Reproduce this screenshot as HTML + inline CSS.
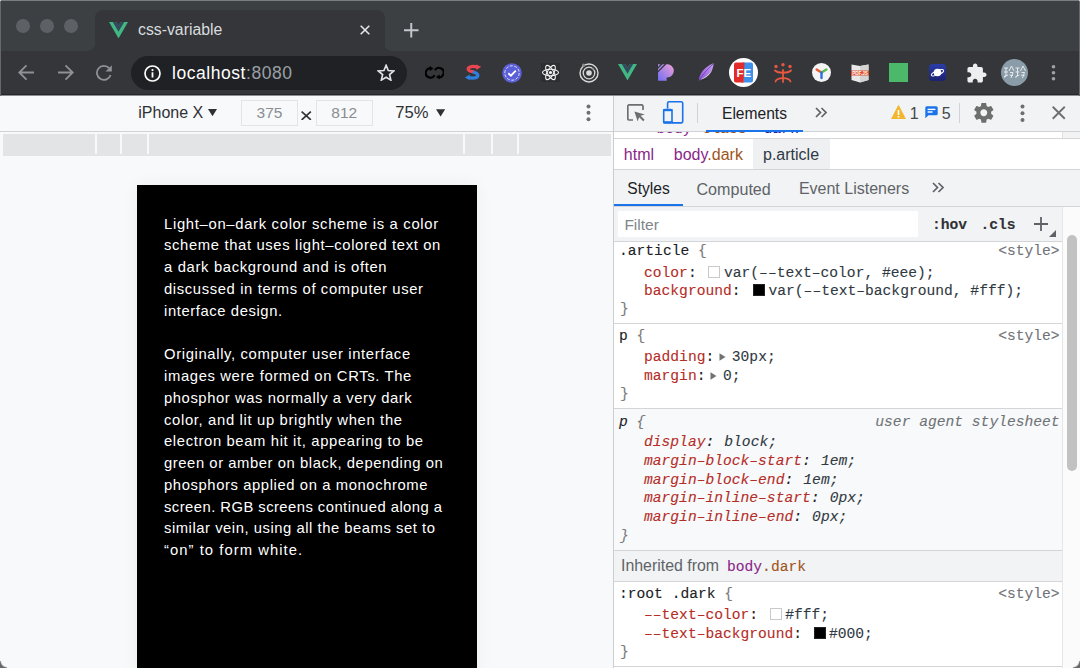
<!DOCTYPE html>
<html><head><meta charset="utf-8">
<style>
*{box-sizing:border-box;margin:0;padding:0}
html,body{width:1080px;height:668px;overflow:hidden;background:#fff}
body{position:relative;font-family:"Liberation Sans",sans-serif}
.a{position:absolute}
.mono{font-family:"Liberation Mono",monospace}
#frame{left:0;top:0;width:1080px;height:668px;border-radius:3px 3px 0 0;background:#3c4043;overflow:hidden}
#tab{left:95px;top:10px;width:290px;height:41px;background:#343639;border-radius:8px 8px 0 0}
.foot{width:8px;height:8px;top:43px;background:#343639}
#toolbar{left:0;top:51px;width:1080px;height:44px;background:#343639;border-bottom:1px solid #26272a}
#omni{left:131px;top:56px;width:276px;height:34px;border-radius:17px;background:#202124}
.tl{width:14px;height:14px;border-radius:50%;background:#5d6064;top:19px}
#page{left:0;top:96px;width:613px;height:572px;background:#f8f9fa}
#devtb{left:0;top:0;width:613px;height:36px;border-bottom:1px solid #d0d3d6}
#media{left:3px;top:38px;width:608px;height:22px;background:#e3e4e6}
.sep{top:0;width:2px;height:20px;background:#f8f9fa}
#article{left:137px;top:89px;width:340px;box-shadow:0 0 16px rgba(0,0,0,0.05);height:500px;background:#000;color:#fff;font-size:14.8px;line-height:21.75px}
.inp{border:1px solid #e3e4e6;background:#f8f9fa;color:#8a8d91;font-size:15.5px;line-height:24px;text-align:center}
.ln{position:absolute;left:27px;white-space:nowrap}
.m{font-family:"Liberation Mono",monospace;font-size:14.63px;line-height:18px;white-space:nowrap;-webkit-text-stroke:0.1px currentColor}
.s{font-family:"Liberation Sans",sans-serif;line-height:18px;white-space:nowrap}
#dt{position:absolute;left:0;top:0;width:0;height:0}
</style></head><body>
<div id="frame" class="a">
  <div class="a" style="left:0;top:0;width:1080px;height:1px;background:#7a7d81"></div>
  <div class="a tl" style="left:16px"></div>
  <div class="a tl" style="left:40px"></div>
  <div class="a tl" style="left:64px"></div>
  <div class="a foot" style="left:87px;background:radial-gradient(circle at 0 0,#3c4043 7.5px,#343639 8.5px)"></div>
  <div class="a foot" style="left:384px;background:radial-gradient(circle at 100% 0,#3c4043 7.5px,#343639 8.5px)"></div>
  <div id="tab" class="a"></div>
  <svg class="a" style="left:109px;top:21.8px" width="19" height="16.45" viewBox="0 0 261.76 226.69"><path fill="#41b883" d="M161.096.001l-30.225 52.351L100.647.001H-.005l130.877 226.688L261.749.001z"/><path fill="#35495e" d="M161.096.001l-30.225 52.351L100.647.001H52.346l78.526 136.01L209.398.001z"/></svg>
  <div class="a" style="left:138px;top:20px;font-size:15.8px;color:#d9dcdf;line-height:20px">css-variable</div>
  <svg class="a" style="left:360px;top:25px" width="10" height="10" viewBox="0 0 10 10"><path d="M0.7 0.7L9.3 9.3M9.3 0.7L0.7 9.3" stroke="#e3e5e8" stroke-width="1.6"/></svg>
  <svg class="a" style="left:404px;top:23px" width="14.5" height="14.5" viewBox="0 0 14 14"><path d="M7 0V14M0 7H14" stroke="#c4c7cb" stroke-width="1.9"/></svg>
  <div id="toolbar" class="a"></div>
  <div class="a" style="left:0;top:95px;width:1080px;height:1px;background:#8d8e90"></div>
  <!-- nav -->
  <svg class="a" style="left:18px;top:64px" width="17" height="17" viewBox="0 0 16 16"><path d="M15 8H1.6M8 1.2L1.2 8L8 14.8" fill="none" stroke="#8e9195" stroke-width="1.7"/></svg>
  <svg class="a" style="left:57px;top:64px" width="17" height="17" viewBox="0 0 16 16"><path d="M1 8H14.4M8 1.2L14.8 8L8 14.8" fill="none" stroke="#8e9195" stroke-width="1.7"/></svg>
  <svg class="a" style="left:95px;top:64px" width="18" height="17" viewBox="0 0 18 17"><path d="M14.2 4.2A7 7 0 1 0 15.6 11" fill="none" stroke="#8e9195" stroke-width="1.8"/><path d="M16.8 1.2V7.5H10.5z" fill="#8e9195"/></svg>
  <div id="omni" class="a"></div>
  <div class="a" style="left:0;top:0;width:1px;height:96px;background:#65686c"></div>
  <div class="a" style="left:1079px;top:0;width:1px;height:96px;background:#65686c"></div>
  <svg class="a" style="left:144px;top:64.5px" width="17" height="17" viewBox="0 0 17 17"><circle cx="8.5" cy="8.5" r="7.5" fill="none" stroke="#fff" stroke-width="1.7"/><rect x="7.6" y="7.3" width="1.8" height="5.2" fill="#fff"/><circle cx="8.5" cy="5.1" r="1.1" fill="#fff"/></svg>
  <div class="a" style="left:172px;top:62.7px;font-size:17.5px;line-height:20px;color:#fff;letter-spacing:0.55px">localhost<span style="color:#9aa0a6">:8080</span></div>
  <svg class="a" style="left:376.8px;top:63.6px" width="18.2" height="17.5" viewBox="0 0 24 23"><path d="M12 1.8L14.9 8.6L22.2 9.2L16.6 14L18.3 21.2L12 17.4L5.7 21.2L7.4 14L1.8 9.2L9.1 8.6z" fill="none" stroke="#e0e2e5" stroke-width="2.2" stroke-linejoin="miter"/></svg>
  <!-- extensions -->
  <svg class="a" style="left:424.5px;top:65.5px" width="19.5" height="13.5" viewBox="0 0 19.5 13.5"><path d="M9.6 9.2A4.7 4.7 0 1 1 6.2 2.3" fill="none" stroke="#000" stroke-width="2.1"/><path d="M4.6 0L8.6 2.4L4.9 4.9z" fill="#000"/><path d="M9.9 4.3A4.7 4.7 0 1 1 13.3 11.2" fill="none" stroke="#000" stroke-width="2.1"/><path d="M14.9 13.5L10.9 11.1L14.6 8.6z" fill="#000"/></svg>
  <svg class="a" style="left:464px;top:64px" width="18" height="16.5" viewBox="0 0 18 16.5"><path d="M13.5 3.2C10 2 4.5 2 4.2 5C4 7.5 9 7.6 9.5 8" fill="none" stroke="#ea4651" stroke-width="3.3"/><path d="M12.2 0.4L17.2 2.8L12.6 6z" fill="#ea4651"/><path d="M9 8C10 8.4 14 8.8 13.8 11.5C13.5 14.5 7.5 14.5 4.5 13.3" fill="none" stroke="#2f7fde" stroke-width="3.3"/><path d="M5.8 10.4L0.8 13.6L5.6 16.2z" fill="#2f7fde"/></svg>
  <svg class="a" style="left:501.5px;top:62.5px" width="20" height="20" viewBox="0 0 20 20"><circle cx="10" cy="10" r="9.8" fill="#5b5fd8"/><circle cx="10" cy="10" r="7.2" fill="none" stroke="#fff" stroke-width="0.8" stroke-dasharray="3 1.5"/><path d="M6.3 10.2L8.9 12.6L13.8 7.6" fill="none" stroke="#fff" stroke-width="1.9"/></svg>
  <svg class="a" style="left:541px;top:63px" width="19" height="19" viewBox="0 0 19 19"><rect width="19" height="19" fill="#2c2e31"/><g fill="none" stroke="#f2f2f2" stroke-width="1.1"><ellipse cx="9.5" cy="9.5" rx="8" ry="3.2"/><ellipse cx="9.5" cy="9.5" rx="8" ry="3.2" transform="rotate(60 9.5 9.5)"/><ellipse cx="9.5" cy="9.5" rx="8" ry="3.2" transform="rotate(-60 9.5 9.5)"/></g><circle cx="9.5" cy="9.5" r="1.6" fill="#f2f2f2"/></svg>
  <svg class="a" style="left:579px;top:62.5px" width="20" height="20" viewBox="0 0 20 20"><g fill="none" stroke="#d9d9d9"><circle cx="10" cy="10" r="9" stroke-width="1.4"/><circle cx="10" cy="10" r="5.8" stroke-width="1.3"/></g><circle cx="10" cy="10" r="2.8" fill="#d9d9d9"/><circle cx="4.6" cy="2.2" r="1.6" fill="#8a8a8a"/><circle cx="14" cy="6" r="1" fill="#8a8a8a"/></svg>
  <svg class="a" style="left:618px;top:64px" width="19" height="16.45" viewBox="0 0 261.76 226.69"><path fill="#41b883" d="M161.096.001l-30.225 52.351L100.647.001H-.005l130.877 226.688L261.749.001z"/><path fill="#35495e" d="M161.096.001l-30.225 52.351L100.647.001H52.346l78.526 136.01L209.398.001z"/></svg>
  <svg class="a" style="left:657.6px;top:64.2px" width="17" height="17" viewBox="0 0 17 17"><defs><linearGradient id="gp" x1="0" y1="1" x2="1" y2="0"><stop offset="0" stop-color="#6f6cf2"/><stop offset="1" stop-color="#f2a2d6"/></linearGradient></defs><path d="M0 8.6L8.4 0.3H10A6.6 6.6 0 0 1 10 13.4H8.6V16.8H0z" fill="url(#gp)"/><path d="M0 0.3H2.6L0 2.9z" fill="#a98ae6"/><path d="M0 4.7L4.5 0.3H6.6L0 6.8z" fill="#a98ae6"/></svg>
  <svg class="a" style="left:697.5px;top:63.2px" width="16" height="18.5" viewBox="0 0 16 18.5"><defs><linearGradient id="gf" x1="0" y1="1" x2="1" y2="0"><stop offset="0" stop-color="#8a52d6"/><stop offset="1" stop-color="#c9a2f2"/></linearGradient></defs><path d="M3 16.5C5 17.8 10 17 12 16.6C8 16.5 5.5 16.8 3 16.5z" fill="#222325"/><path d="M1 17.8C0.8 11.5 6 4 15.6 0.3C15.2 7.5 11.5 13.5 3 16.2z" fill="url(#gf)"/><path d="M3 16.2C8 14 12 11 14.4 5.6C13.2 10.5 9.6 14.4 3.6 16.6z" fill="#e6e0ee"/><path d="M1.2 17.4C4.5 12 9 6.5 15 1" stroke="#6a3ab8" stroke-width="0.8" fill="none"/></svg>
  <svg class="a" style="left:729px;top:58px" width="29" height="29" viewBox="0 0 29 29"><circle cx="14.5" cy="14.5" r="14.5" fill="#fff"/><path d="M7 4.6H14.5V24.4H7A2 2 0 0 1 5 22.4V6.6A2 2 0 0 1 7 4.6z" fill="#e12b2b"/><path d="M14.5 4.6H22A2 2 0 0 1 24 6.6V22.4A2 2 0 0 1 22 24.4H14.5z" fill="#3e90ea"/><path d="M13.5 4.6H15.5L14.5 24.4H12.5z" fill="#e12b2b"/><text x="14.8" y="18.6" font-family="Liberation Sans" font-weight="bold" font-size="11.5" fill="#fff" text-anchor="middle">FE</text></svg>
  <svg class="a" style="left:773.5px;top:62.5px" width="18" height="20" viewBox="0 0 18 20"><g fill="#e8573f"><circle cx="2" cy="3.5" r="1.7"/><circle cx="9" cy="1.8" r="1.7"/><circle cx="16" cy="3.5" r="1.7"/></g><g fill="none" stroke="#e8573f" stroke-width="1.8" stroke-linecap="round"><path d="M1 7.5C4 10.5 14 10.5 17 7.5"/><path d="M9 7V19"/><path d="M1.5 18.5C3 14 15 14 16.5 18.5"/></g></svg>
  <svg class="a" style="left:811.5px;top:63px" width="19" height="19" viewBox="0 0 19 19"><circle cx="9.5" cy="9.5" r="9.5" fill="#f4f4f4"/><path d="M9.5 9.5L4.6 6.4" stroke="#ea5a35" stroke-width="2.4" stroke-linecap="round"/><path d="M9.5 9.5L14.4 6.4" stroke="#5cbd4e" stroke-width="2.4" stroke-linecap="round"/><path d="M9.5 9.5V15" stroke="#2a6ee8" stroke-width="2.4" stroke-linecap="round"/></svg>
  <svg class="a" style="left:851px;top:63px" width="18" height="20" viewBox="0 0 18 20"><path d="M0.5 1.5L9 3L17.5 1.5V17L9 19.5L0.5 17z" fill="#e9e9e9"/><path d="M9 3V19.5L17.5 17V1.5z" fill="#d4d4d4"/><rect x="0" y="7.5" width="18" height="5" fill="#e2512a"/><text x="9" y="11.8" font-family="Liberation Sans" font-weight="bold" font-size="4.6" fill="#fff" text-anchor="middle">PDF.JS</text></svg>
  <div class="a" style="left:889px;top:63px;width:19px;height:19px;background:#4cb86a"></div>
  <svg class="a" style="left:928.5px;top:63.5px" width="17" height="17" viewBox="0 0 17 17"><defs><linearGradient id="gpl" x1="0" y1="0" x2="0" y2="1"><stop offset="0" stop-color="#2a3ca8"/><stop offset="1" stop-color="#1b2270"/></linearGradient></defs><rect width="17" height="17" rx="3.5" fill="url(#gpl)"/><circle cx="8.5" cy="8.5" r="3.8" fill="#fff"/><ellipse cx="8.5" cy="8.8" rx="6.6" ry="2" transform="rotate(-22 8.5 8.8)" fill="none" stroke="#fff" stroke-width="1"/></svg>
  <svg class="a" style="left:966.5px;top:62.5px" width="20" height="20" viewBox="1.5 0.5 22 22"><path fill="#eceef0" d="M20.5 11H19V7c0-1.1-.9-2-2-2h-4V3.5C13 2.12 11.88 1 10.5 1S8 2.12 8 3.5V5H4c-1.1 0-1.99.9-1.99 2v3.8H3.5c1.49 0 2.7 1.21 2.7 2.7s-1.210 2.7-2.7 2.7H2V20c0 1.1.9 2 2 2h3.8v-1.5c0-1.49 1.21-2.7 2.7-2.7 1.49 0 2.7 1.21 2.7 2.7V22H17c1.1 0 2-.9 2-2v-4h1.5c1.38 0 2.5-1.12 2.5-2.5S21.880 11 20.5 11z"/></svg>
  <div class="a" style="left:1001px;top:59px;width:27px;height:27px;border-radius:50%;background:#8b9ca9"></div>
  <svg class="a" style="left:1003px;top:64px" width="23" height="17" viewBox="0 0 23 17"><g stroke="#eef0f2" stroke-width="0.9" fill="none"><path d="M1 4H5M1 8H5M3 4V12L1 13.5M1 12.5L5 11"/><path d="M8.5 2L6 7M8.5 2L11 7M7 8.5H10L8 14M6.5 11L10 11.5"/><path d="M12.5 4H16.5M12.5 8H16.5M14.5 4V12L12.5 13.5M12.5 12.5L16.5 11"/><path d="M20 2L17.5 7M20 2L22.5 7M18.5 8.5H21.5L19.5 14M18 11L21.5 11.5"/></g></svg>
  <svg class="a" style="left:1050px;top:64px" width="7" height="17" viewBox="0 0 7 17"><g fill="#a0a4a8"><circle cx="3.5" cy="2.7" r="1.8"/><circle cx="3.5" cy="8.7" r="1.8"/><circle cx="3.5" cy="14.7" r="1.8"/></g></svg>
</div>
<div id="page" class="a">
  <div id="devtb" class="a"></div>
  <div class="a" style="left:138.3px;top:7.9px;font-size:16px;line-height:18px;color:#303134">iPhone X</div>
  <svg class="a" style="left:208.2px;top:13.2px" width="9" height="7.2" viewBox="0 0 10 8"><path d="M0 0H10L5 8z" fill="#303134"/></svg>
  <div class="a inp" style="left:241px;top:3.5px;width:57px;height:26px">375</div>
  <svg class="a" style="left:301px;top:14.5px" width="10.5" height="9.5" viewBox="0 0 10 9"><path d="M0.6 0.5L9.4 8.5M9.4 0.5L0.6 8.5" stroke="#303134" stroke-width="1.5"/></svg>
  <div class="a inp" style="left:316px;top:3.5px;width:56.5px;height:26px">812</div>
  <div class="a" style="left:395.3px;top:8.0px;font-size:16.6px;line-height:18px;color:#303134">75%</div>
  <svg class="a" style="left:435.6px;top:12.9px" width="9.2" height="7.8" viewBox="0 0 10 8"><path d="M0 0H10L5 8z" fill="#303134"/></svg>
  <svg class="a" style="left:585px;top:8px" width="7" height="18" viewBox="0 0 7 18"><g fill="#6e7175"><circle cx="3.5" cy="2.5" r="2"/><circle cx="3.5" cy="8.8" r="2"/><circle cx="3.5" cy="15.2" r="2"/></g></svg>
  <div id="media" class="a">
    <div class="a sep" style="left:92px"></div>
    <div class="a sep" style="left:117px"></div>
    <div class="a sep" style="left:144px"></div>
    <div class="a sep" style="left:460px"></div>
    <div class="a sep" style="left:488px"></div>
    <div class="a sep" style="left:514px"></div>
  </div>
  <div id="article" class="a">
<div class="ln" style="top:28.60px;letter-spacing:0.694px">Light–on–dark color scheme is a color</div>
<div class="ln" style="top:50.35px;letter-spacing:0.643px">scheme that uses light–colored text on</div>
<div class="ln" style="top:72.10px;letter-spacing:0.669px">a dark background and is often</div>
<div class="ln" style="top:93.85px;letter-spacing:0.626px">discussed in terms of computer user</div>
<div class="ln" style="top:115.60px;letter-spacing:0.594px">interface design.</div>
<div class="ln" style="top:159.30px;letter-spacing:0.644px">Originally, computer user interface</div>
<div class="ln" style="top:181.05px;letter-spacing:0.64px">images were formed on CRTs. The</div>
<div class="ln" style="top:202.80px;letter-spacing:0.569px">phosphor was normally a very dark</div>
<div class="ln" style="top:224.55px;letter-spacing:0.662px">color, and lit up brightly when the</div>
<div class="ln" style="top:246.30px;letter-spacing:0.639px">electron beam hit it, appearing to be</div>
<div class="ln" style="top:268.05px;letter-spacing:0.567px">green or amber on black, depending on</div>
<div class="ln" style="top:289.80px;letter-spacing:0.6px">phosphors applied on a monochrome</div>
<div class="ln" style="top:311.55px;letter-spacing:0.456px">screen. RGB screens continued along a</div>
<div class="ln" style="top:333.30px;letter-spacing:0.536px">similar vein, using all the beams set to</div>
<div class="ln" style="top:355.05px;letter-spacing:1.05px">“on” to form white.</div>
  </div>
</div>
<!--DT-->
<div id="dt">
<div class="a" style="left:613px;top:96px;width:467px;height:572px;background:#fff"></div>
<div class="a" style="left:613px;top:96px;width:1px;height:572px;background:#cbcdd1"></div>
<div class="a" style="left:614px;top:96px;width:466px;height:35px;background:#f1f3f4"></div>
<div class="a" style="left:614px;top:131px;width:466px;height:1px;background:#cfd2d6"></div>
<div class="a" style="left:614px;top:138px;width:466px;height:1px;background:#d3d5d9"></div>
<div class="a" style="left:614px;top:169px;width:466px;height:1px;background:#d3d5d9"></div>
<div class="a" style="left:614px;top:170px;width:466px;height:36px;background:#f1f3f4"></div>
<div class="a" style="left:614px;top:206px;width:466px;height:1px;background:#d3d5d9"></div>
<div class="a" style="left:614px;top:207px;width:449px;height:34px;background:#f1f3f4"></div>
<div class="a" style="left:614px;top:241px;width:449px;height:1px;background:#d3d5d9"></div>
<div class="a" style="left:614px;top:323px;width:449px;height:1px;background:#d3d5d9"></div>
<div class="a" style="left:614px;top:409px;width:449px;height:141px;background:#f8f9fa"></div>
<div class="a" style="left:614px;top:408px;width:449px;height:1px;background:#d3d5d9"></div>
<div class="a" style="left:614px;top:550px;width:449px;height:1px;background:#d3d5d9"></div>
<div class="a" style="left:614px;top:551px;width:449px;height:30px;background:#f1f3f4"></div>
<div class="a" style="left:614px;top:581px;width:449px;height:1px;background:#d3d5d9"></div>
<div class="a" style="left:614px;top:666px;width:449px;height:1px;background:#d3d5d9"></div>
<div class="a" style="left:1062px;top:207px;width:1px;height:461px;background:#e6e6e6"></div>
<div class="a" style="left:1063px;top:207px;width:17px;height:461px;background:#fbfbfb"></div>
<div class="a" style="left:1066.5px;top:235px;width:10.5px;height:236px;border-radius:5.25px;background:#c2c2c2"></div>
<div class="a" style="left:1062px;top:132px;width:1px;height:6px;background:#e0e0e0"></div>
<div class="a" style="left:1063px;top:132px;width:17px;height:6px;background:#f3f3f3"></div>
<div class="a m" style="left:619.00px;top:241.90px;color:#202124;">.article <span style="color:#7a7a7a">{</span></div>
<div class="a m" style="left:998.20px;top:241.90px;color:#6f7378;">&lt;style&gt;</div>
<div class="a m" style="left:644.00px;top:263.70px;color:#202124;"><span style="color:#b52d27">color</span>:</div>
<div class="a" style="left:707.80px;top:265.80px;width:12px;height:12px;background:#fff;border:1px solid #c9c9c9"></div>
<div class="a m" style="left:724.00px;top:263.70px;color:#303942;">var(––text–color, #eee);</div>
<div class="a m" style="left:644.00px;top:282.00px;color:#202124;"><span style="color:#b52d27">background</span>:</div>
<div class="a" style="left:752.70px;top:284.30px;width:12px;height:12px;background:#000;border:1px solid #222"></div>
<div class="a m" style="left:768.50px;top:282.00px;color:#303942;">var(––text–background, #fff);</div>
<div class="a m" style="left:620.00px;top:300.10px;color:#7a7a7a;">}</div>
<div class="a m" style="left:619.00px;top:327.20px;color:#202124;">p <span style="color:#7a7a7a">{</span></div>
<div class="a m" style="left:998.20px;top:327.20px;color:#6f7378;">&lt;style&gt;</div>
<div class="a m" style="left:644.00px;top:347.90px;color:#202124;"><span style="color:#b52d27">padding</span>:</div>
<svg class="a" style="left:718.5px;top:353px" width="7" height="8" viewBox="0 0 7 8"><path d="M0.5 0.3L6.5 4L0.5 7.7z" fill="#727272"/></svg>
<div class="a m" style="left:731.80px;top:347.90px;color:#303942;">30px;</div>
<div class="a m" style="left:644.00px;top:366.50px;color:#202124;"><span style="color:#b52d27">margin</span>:</div>
<svg class="a" style="left:710px;top:371.5px" width="7" height="8" viewBox="0 0 7 8"><path d="M0.5 0.3L6.5 4L0.5 7.7z" fill="#727272"/></svg>
<div class="a m" style="left:723.02px;top:366.50px;color:#303942;">0;</div>
<div class="a m" style="left:620.00px;top:385.10px;color:#7a7a7a;">}</div>
<div class="a m" style="left:619.00px;top:412.50px;color:#202124;font-style:italic;">p <span style="color:#7a7a7a">{</span></div>
<div class="a m" style="left:875.30px;top:412.50px;color:#6f7378;font-style:italic;">user agent stylesheet</div>
<div class="a m" style="left:644.00px;top:433.00px;color:#202124;font-style:italic;"><span style="color:#b52d27">display</span>:</div>
<div class="a m" style="left:724.32px;top:433.00px;color:#303942;font-style:italic;">block;</div>
<div class="a m" style="left:644.00px;top:451.80px;color:#202124;font-style:italic;"><span style="color:#b52d27">margin–block–start</span>:</div>
<div class="a m" style="left:820.90px;top:451.80px;color:#303942;font-style:italic;">1em;</div>
<div class="a m" style="left:644.00px;top:470.60px;color:#202124;font-style:italic;"><span style="color:#b52d27">margin–block–end</span>:</div>
<div class="a m" style="left:803.34px;top:470.60px;color:#303942;font-style:italic;">1em;</div>
<div class="a m" style="left:644.00px;top:489.40px;color:#202124;font-style:italic;"><span style="color:#b52d27">margin–inline–start</span>:</div>
<div class="a m" style="left:829.68px;top:489.40px;color:#303942;font-style:italic;">0px;</div>
<div class="a m" style="left:644.00px;top:508.20px;color:#202124;font-style:italic;"><span style="color:#b52d27">margin–inline–end</span>:</div>
<div class="a m" style="left:812.12px;top:508.20px;color:#303942;font-style:italic;">0px;</div>
<div class="a m" style="left:620.00px;top:526.50px;color:#7a7a7a;font-style:italic;">}</div>
<div class="a s" style="left:621.00px;top:557.00px;color:#5f6368;font-size:15.9px;">Inherited from</div>
<div class="a m" style="left:727.00px;top:558.00px;color:#202124;"><span style="color:#8a2688">body</span><span style="color:#a0541c">.dark</span></div>
<div class="a m" style="left:619.00px;top:584.60px;color:#202124;">:root .dark <span style="color:#7a7a7a">{</span></div>
<div class="a m" style="left:998.20px;top:584.60px;color:#6f7378;">&lt;style&gt;</div>
<div class="a m" style="left:644.00px;top:606.10px;color:#202124;"><span style="color:#b52d27">––text–color</span>:</div>
<div class="a" style="left:769.60px;top:608.30px;width:12px;height:12px;background:#fff;border:1px solid #c9c9c9"></div>
<div class="a m" style="left:785.20px;top:606.10px;color:#303942;">#fff;</div>
<div class="a m" style="left:644.00px;top:624.50px;color:#202124;"><span style="color:#b52d27">––text–background</span>:</div>
<div class="a" style="left:814.20px;top:626.70px;width:12px;height:12px;background:#000;border:1px solid #222"></div>
<div class="a m" style="left:829.00px;top:624.50px;color:#303942;">#000;</div>
<div class="a m" style="left:620.00px;top:642.70px;color:#7a7a7a;">}</div>
<div class="a" style="left:618px;top:211px;width:300px;height:26px;background:#fff"></div>
<div class="a s" style="left:624.40px;top:215.60px;color:#80868b;font-size:15.5px;">Filter</div>
<div class="a m" style="left:932.00px;top:216.30px;color:#303134;font-weight:bold">:hov</div>
<div class="a m" style="left:980.50px;top:216.30px;color:#303134;font-weight:bold">.cls</div>
<svg class="a" style="left:1033.5px;top:216.5px" width="14" height="14" viewBox="0 0 14 14"><path d="M7 0V14M0 7H14" stroke="#5f6368" stroke-width="1.8"/></svg>
<svg class="a" style="left:1049px;top:230px" width="7" height="7" viewBox="0 0 7 7"><path d="M7 0V7H0z" fill="#5f6368"/></svg>
<div class="a s" style="left:627.30px;top:180.30px;color:#202124;font-size:15.6px;">Styles</div>
<div class="a s" style="left:696.50px;top:179.60px;color:#5f6368;font-size:16.1px;">Computed</div>
<div class="a s" style="left:798.90px;top:180.30px;color:#5f6368;font-size:16.0px;">Event Listeners</div>
<svg class="a" style="left:932px;top:182px" width="12" height="11" viewBox="0 0 12 11"><path d="M1 1L5.5 5.5L1 10M6.5 1L11 5.5L6.5 10" fill="none" stroke="#5f6368" stroke-width="1.7"/></svg>
<div class="a" style="left:614px;top:204px;width:69px;height:2px;background:#1a73e8"></div>
<div class="a" style="left:753px;top:139px;width:77px;height:30px;background:#eef0f2"></div>
<div class="a s" style="left:623.80px;top:145.60px;color:#8a2688;font-size:16px;">html</div>
<div class="a s" style="left:673.80px;top:145.60px;color:#202124;font-size:16px;"><span style="color:#8a2688">body</span><span style="color:#a0541c">.dark</span></div>
<div class="a s" style="left:763.00px;top:145.60px;color:#303942;font-size:16px;">p.article</div>
<div class="a" style="left:614px;top:132px;width:448px;height:6px;overflow:hidden"><div class="a m" style="left:42.5px;top:-12px;color:#8a2688">body</div><div class="a m" style="left:88.5px;top:-12px;color:#a0541c">class</div><div class="a m" style="left:132px;top:-12px;color:#1a1aa6">="dark"</div><div class="a m" style="left:23px;top:-12px;color:#727272">&#9662;</div></div>
<svg class="a" style="left:627px;top:103.5px" width="19" height="18" viewBox="0 0 19 18"><path d="M6 16H2.3A1.5 1.5 0 0 1 0.8 14.5V2.3A1.5 1.5 0 0 1 2.3 0.8H14.5A1.5 1.5 0 0 1 16 2.3V6" fill="none" stroke="#6e6e6e" stroke-width="1.7"/><path d="M7.4 7.5L17.8 10.4L13.6 11.8L17.6 15.8L16.2 17.2L12.2 13.2L10.6 17.3z" fill="#6e6e6e"/></svg>
<svg class="a" style="left:661.5px;top:100.5px" width="22" height="23" viewBox="0 0 22 23"><path d="M5.6 7.6V2.2A1.4 1.4 0 0 1 7 0.8H19.3A1.4 1.4 0 0 1 20.7 2.2V20.5A1.4 1.4 0 0 1 19.3 21.9H10" fill="none" stroke="#1a73e8" stroke-width="1.6"/><rect x="1.7" y="8.6" width="8.3" height="13.3" rx="1.2" fill="none" stroke="#1a73e8" stroke-width="1.6"/><rect x="1.2" y="8" width="9.3" height="2.2" fill="#1a73e8"/><rect x="1.2" y="20.2" width="9.3" height="2.2" fill="#1a73e8"/></svg>
<div class="a" style="left:697px;top:103px;width:1px;height:20px;background:#d0d3d6"></div>
<div class="a s" style="left:722.00px;top:104.90px;color:#202124;font-size:15.6px;">Elements</div>
<div class="a" style="left:706px;top:129.5px;width:97px;height:2px;background:#1a73e8"></div>
<svg class="a" style="left:815px;top:107px" width="12" height="11" viewBox="0 0 12 11"><path d="M1 1L5.5 5.5L1 10M6.5 1L11 5.5L6.5 10" fill="none" stroke="#5f6368" stroke-width="1.7"/></svg>
<svg class="a" style="left:890.5px;top:104.5px" width="15" height="14.5" viewBox="0 0 15 14.5"><path d="M7.5 0.6L14.4 13.9H0.6z" fill="#f2b630" stroke="#f2b630" stroke-width="1" stroke-linejoin="round"/><rect x="6.7" y="5" width="1.6" height="5" fill="#fff"/><rect x="6.7" y="11" width="1.6" height="1.6" fill="#fff"/></svg>
<div class="a s" style="left:909.80px;top:104.60px;color:#45484c;font-size:16px;">1</div>
<svg class="a" style="left:924.5px;top:105.5px" width="13" height="12.5" viewBox="0 0 13 12.5"><path d="M1.8 0.3H11.2A1.5 1.5 0 0 1 12.7 1.8V7.8A1.5 1.5 0 0 1 11.2 9.3H3.5L0.3 12.3V1.8A1.5 1.5 0 0 1 1.8 0.3z" fill="#1a73e8"/><rect x="2.6" y="2.7" width="7.8" height="1.4" fill="#fff"/><rect x="2.6" y="5.3" width="5" height="1.4" fill="#fff"/></svg>
<div class="a s" style="left:941.80px;top:104.60px;color:#45484c;font-size:16px;">5</div>
<div class="a" style="left:959px;top:103px;width:1px;height:20px;background:#d0d3d6"></div>
<svg class="a" style="left:972.4px;top:100.6px" width="23.6" height="23.6" viewBox="0 0 24 24"><path fill="#6e6e6e" d="M19.43 12.98c.04-.32.07-.64.07-.98s-.03-.66-.07-.98l2.11-1.65c.19-.15.24-.42.12-.64l-2-3.46c-.12-.22-.39-.3-.61-.22l-2.49 1c-.52-.4-1.08-.73-1.69-.98l-.38-2.65C14.46 2.18 14.25 2 14 2h-4c-.25 0-.46.18-.49.42l-.38 2.65c-.61.25-1.17.59-1.69.98l-2.49-1c-.23-.09-.49 0-.61.22l-2 3.46c-.13.22-.07.49.12.64l2.11 1.65c-.04.32-.07.65-.07.98s.03.66.07.98l-2.11 1.65c-.19.15-.24.42-.12.64l2 3.46c.12.22.39.3.61.22l2.49-1c.52.4 1.08.73 1.69.98l.38 2.65c.03.24.24.42.49.42h4c.25 0 .46-.18.49-.42l.38-2.65c.61-.25 1.17-.59 1.69-.98l2.49 1c.23.09.49 0 .61-.22l2-3.46c.12-.22.07-.49-.12-.64l-2.11-1.65zM12 15.5c-1.93 0-3.5-1.57-3.5-3.5s1.57-3.5 3.5-3.5 3.5 1.57 3.5 3.5-1.57 3.5-3.5 3.5z"/></svg>
<svg class="a" style="left:1019.5px;top:103.5px" width="5" height="18" viewBox="0 0 5 18"><g fill="#6e6e6e"><circle cx="2.5" cy="2.6" r="2"/><circle cx="2.5" cy="9.3" r="2"/><circle cx="2.5" cy="15.9" r="2"/></g></svg>
<svg class="a" style="left:1052px;top:106px" width="13.5" height="13.5" viewBox="0 0 13 13"><path d="M0.7 0.7L12.3 12.3M12.3 0.7L0.7 12.3" stroke="#6e6e6e" stroke-width="1.8"/></svg>
</div>
<!--/DT-->
<div class="a" style="left:0;top:661px;width:7px;height:7px;background:radial-gradient(circle at 100% 0,rgba(80,80,80,0) 5.5px,rgba(80,80,80,.85) 7px)"></div>
<div class="a" style="left:1073px;top:661px;width:7px;height:7px;background:radial-gradient(circle at 0 0,rgba(80,80,80,0) 5.5px,rgba(80,80,80,.85) 7px)"></div>
</body></html>
